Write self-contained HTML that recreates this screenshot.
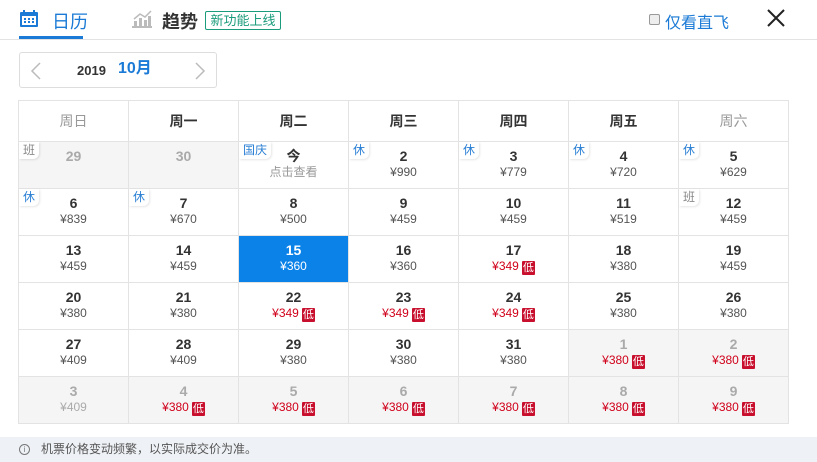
<!DOCTYPE html>
<html><head><meta charset="utf-8"><style>
*{margin:0;padding:0;box-sizing:border-box}
body{width:817px;height:462px;background:#fff;font-family:"Liberation Sans","Noto Sans CJK SC",sans-serif;position:relative;overflow:hidden;color:#333}
.top{position:absolute;left:0;top:0;width:817px;height:40px;border-bottom:1px solid #e3e3e3}
.tab1{position:absolute;left:19px;top:6px;height:33px;width:64px;border-bottom:3px solid #1a7ad6}
.t1{position:absolute;left:52px;top:8px;font-size:18px;color:#1a7ad6}
.t2{position:absolute;left:162px;top:8px;font-size:18px;font-weight:bold;color:#333}
.new{position:absolute;left:205px;top:11px;width:76px;height:19px;border:1px solid #1a9b7c;color:#1a9b7c;font-size:13px;line-height:17px;text-align:center;border-radius:2px}
.chk{position:absolute;left:649px;top:14px;width:11px;height:11px;border:1px solid #999;border-radius:2px;background:#eee}
.zf{position:absolute;left:665px;top:9px;font-size:16px;color:#1a7ad6}
.nav{position:absolute;left:19px;top:52px;width:198px;height:36px;border:1px solid #ddd;border-radius:3px}
.yr{position:absolute;left:57px;top:10px;font-size:13px;font-weight:bold;color:#333}
.mo{position:absolute;left:98px;top:6px;font-size:16px;font-weight:bold;color:#1a7ad6;line-height:20px}
table{position:absolute;left:18px;top:100px;border-collapse:collapse;table-layout:fixed}
td{width:110px;height:47px;border:1px solid #e3e3e3;text-align:center;vertical-align:top;position:relative;padding-top:6px}
th{width:110px;height:41px;border:1px solid #e3e3e3;font-size:14px;font-weight:bold;color:#333}
th.g{color:#999;font-weight:normal}
.n{font-size:14px;font-weight:bold;line-height:17px;color:#333}
.p{font-size:12px;line-height:15px;color:#555}
.o{background:#f5f5f5}.o .n{color:#aaa}.o .p{color:#aaa}
.r{color:#d0021b!important}
.b{display:inline-block;background:#c8102e;color:#fff;font-size:11px;line-height:14px;padding:0 1px;margin-left:3px;border-radius:1px;vertical-align:-1px}
.tg{position:absolute;left:0;top:0;font-size:12px;color:#2a7fd4;background:#fff;padding:1px 4px;line-height:15px;box-shadow:1px 1px 2px rgba(0,0,0,.1);border-radius:0 0 6px 0}
.tg.k{color:#888}
.sel{background:#0a82e8}.sel .n,.sel .p{color:#fff}
.ft{position:absolute;left:0;top:437px;width:817px;height:25px;background:#eef1f5;font-size:12px;color:#555;line-height:25px;padding-left:41px}
.ic{position:absolute;left:19px;top:7px;width:11px;height:11px;border:1px solid #777;border-radius:50%;font-size:8px;line-height:9px;text-align:center;color:#777}
</style></head><body>
<div class="top">
<div class="tab1"></div>
<svg style="position:absolute;left:20px;top:10px" width="18" height="17" viewBox="0 0 18 17"><rect x="0" y="2" width="18" height="15" rx="1" fill="#1a7ad6"/><rect x="2" y="6" width="14" height="9" fill="#fff"/><rect x="3" y="0" width="2" height="4" fill="#1a7ad6"/><rect x="13" y="0" width="2" height="4" fill="#1a7ad6"/><g fill="#1a7ad6"><rect x="4" y="8" width="2" height="2"/><rect x="8" y="8" width="2" height="2"/><rect x="12" y="8" width="2" height="2"/><rect x="4" y="11" width="2" height="2"/><rect x="8" y="11" width="2" height="2"/><rect x="12" y="11" width="2" height="2"/></g></svg>
<div class="t1">日历</div>
<svg style="position:absolute;left:132px;top:10px" width="20" height="18" viewBox="0 0 20 18"><g fill="#bbb"><rect x="0" y="16" width="20" height="2"/><rect x="2" y="11" width="3" height="5"/><rect x="7" y="8" width="3" height="8"/><rect x="12" y="10" width="3" height="6"/><rect x="16" y="6" width="3" height="10"/></g><polyline points="2,9 8,4 13,7 19,1" fill="none" stroke="#bbb" stroke-width="1.5"/></svg>
<div class="t2">趋势</div>
<div class="new">新功能上线</div>
<div class="chk"></div><div class="zf">仅看直飞</div>
<svg style="position:absolute;left:766px;top:8px" width="20" height="20"><path d="M2 2L18 18M18 2L2 18" stroke="#222" stroke-width="2"/></svg>
</div>
<div class="nav">
<svg style="position:absolute;left:10px;top:9px" width="12" height="18"><path d="M10 1L2 9L10 17" fill="none" stroke="#bbb" stroke-width="1.5"/></svg>
<div class="yr">2019</div><div class="mo">10月</div>
<svg style="position:absolute;left:174px;top:9px" width="12" height="18"><path d="M2 1L10 9L2 17" fill="none" stroke="#bbb" stroke-width="1.5"/></svg>
</div>
<table>
<tr><th class="g">周日</th><th>周一</th><th>周二</th><th>周三</th><th>周四</th><th>周五</th><th class="g">周六</th></tr>
<tr>
<td class="o"><span class="tg k">班</span><div class="n">29</div></td>
<td class="o"><div class="n">30</div></td>
<td><span class="tg">国庆</span><div class="n">今</div><div class="p" style="color:#999">点击查看</div></td>
<td><span class="tg">休</span><div class="n">2</div><div class="p">¥990</div></td>
<td><span class="tg">休</span><div class="n">3</div><div class="p">¥779</div></td>
<td><span class="tg">休</span><div class="n">4</div><div class="p">¥720</div></td>
<td><span class="tg">休</span><div class="n">5</div><div class="p">¥629</div></td>
</tr>
<tr>
<td><span class="tg">休</span><div class="n">6</div><div class="p">¥839</div></td>
<td><span class="tg">休</span><div class="n">7</div><div class="p">¥670</div></td>
<td><div class="n">8</div><div class="p">¥500</div></td>
<td><div class="n">9</div><div class="p">¥459</div></td>
<td><div class="n">10</div><div class="p">¥459</div></td>
<td><div class="n">11</div><div class="p">¥519</div></td>
<td><span class="tg k">班</span><div class="n">12</div><div class="p">¥459</div></td>
</tr>
<tr>
<td><div class="n">13</div><div class="p">¥459</div></td>
<td><div class="n">14</div><div class="p">¥459</div></td>
<td class="sel"><div class="n">15</div><div class="p">¥360</div></td>
<td><div class="n">16</div><div class="p">¥360</div></td>
<td><div class="n">17</div><div class="p r">¥349<span class="b">低</span></div></td>
<td><div class="n">18</div><div class="p">¥380</div></td>
<td><div class="n">19</div><div class="p">¥459</div></td>
</tr>
<tr>
<td><div class="n">20</div><div class="p">¥380</div></td>
<td><div class="n">21</div><div class="p">¥380</div></td>
<td><div class="n">22</div><div class="p r">¥349<span class="b">低</span></div></td>
<td><div class="n">23</div><div class="p r">¥349<span class="b">低</span></div></td>
<td><div class="n">24</div><div class="p r">¥349<span class="b">低</span></div></td>
<td><div class="n">25</div><div class="p">¥380</div></td>
<td><div class="n">26</div><div class="p">¥380</div></td>
</tr>
<tr>
<td><div class="n">27</div><div class="p">¥409</div></td>
<td><div class="n">28</div><div class="p">¥409</div></td>
<td><div class="n">29</div><div class="p">¥380</div></td>
<td><div class="n">30</div><div class="p">¥380</div></td>
<td><div class="n">31</div><div class="p">¥380</div></td>
<td class="o"><div class="n">1</div><div class="p r">¥380<span class="b">低</span></div></td>
<td class="o"><div class="n">2</div><div class="p r">¥380<span class="b">低</span></div></td>
</tr>
<tr>
<td class="o"><div class="n">3</div><div class="p">¥409</div></td>
<td class="o"><div class="n">4</div><div class="p r">¥380<span class="b">低</span></div></td>
<td class="o"><div class="n">5</div><div class="p r">¥380<span class="b">低</span></div></td>
<td class="o"><div class="n">6</div><div class="p r">¥380<span class="b">低</span></div></td>
<td class="o"><div class="n">7</div><div class="p r">¥380<span class="b">低</span></div></td>
<td class="o"><div class="n">8</div><div class="p r">¥380<span class="b">低</span></div></td>
<td class="o"><div class="n">9</div><div class="p r">¥380<span class="b">低</span></div></td>
</tr>
</table>
<div class="ft"><div class="ic">i</div>机票价格变动频繁，以实际成交价为准。</div>
</body></html>
